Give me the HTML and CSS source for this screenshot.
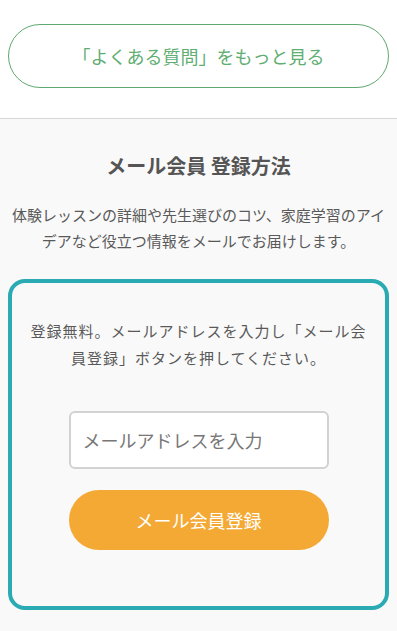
FILE: index.html
```html
<!DOCTYPE html>
<html lang="ja">
<head>
<meta charset="utf-8">
<title>メール会員 登録方法</title>
<link rel="stylesheet" href="styles.css">
</head>
<body>
<section class="faq">
  <a class="faq-btn" href="#">「よくある質問」をもっと見る</a>
</section>
<section class="signup">
  <h2 class="signup-title">メール会員 登録方法</h2>
  <p class="signup-lead">体験レッスンの詳細や先生選びのコツ、家庭学習のアイデアなど役立つ情報をメールでお届けします。</p>
  <div class="card">
    <p class="card-text">登録無料。メールアドレスを入力し「メール会員登録」ボタンを押してください。</p>
    <form class="card-form">
      <input class="email" type="email" placeholder="メールアドレスを入力">
      <button class="submit" type="button">メール会員登録</button>
    </form>
  </div>
</section>
</body>
</html>
```
FILE: styles.css
```css
* { box-sizing: border-box; }
html, body {
  margin: 0;
  padding: 0;
}
body {
  font-family: "Noto Sans CJK JP", "Noto Sans", sans-serif;
  color: #555;
  background: #f9f9f9;
  height: 631px;
  overflow: hidden;
}
.faq {
  background: #fff;
  padding: 24px 8px 30px;
}
.faq-btn {
  display: flex;
  align-items: center;
  justify-content: center;
  height: 64px;
  border: 1px solid #5fa86f;
  border-radius: 32px;
  color: #5fae72;
  font-size: 18px;
  text-decoration: none;
  background: #fff;
}
.signup {
  border-top: 1px solid #d6d6d6;
  padding: 32px 8px 30px;
}
.signup-title {
  margin: 0;
  text-align: center;
  font-size: 20px;
  line-height: 30px;
  font-weight: bold;
  color: #555;
}
.signup-lead {
  margin: 21px 0 25px;
  text-align: center;
  font-size: 15px;
  line-height: 26px;
  color: #5a5a5a;
}
.card {
  border: 4px solid #2aaab2;
  border-radius: 17px;
  background: #f9f9f9;
  padding: 34px 16px 56px;
}
.card-text {
  margin: 0;
  text-align: center;
  font-size: 15px;
  line-height: 27px;
  letter-spacing: 1px;
  color: #5a5a5a;
}
.card-form {
  margin-top: 40px;
  display: flex;
  flex-direction: column;
  align-items: center;
  gap: 21px;
}
.email {
  width: 260px;
  height: 58px;
  border: 2px solid #d2d2d2;
  border-radius: 6px;
  background: #fff;
  padding: 0 12px;
  font-family: inherit;
  font-size: 18px;
  color: #555;
  outline: none;
}
.email::placeholder {
  color: #777;
}
.submit {
  width: 260px;
  height: 60px;
  border: none;
  border-radius: 30px;
  background: #f4a935;
  color: #fff;
  font-family: inherit;
  font-size: 18px;
  cursor: pointer;
}
```
